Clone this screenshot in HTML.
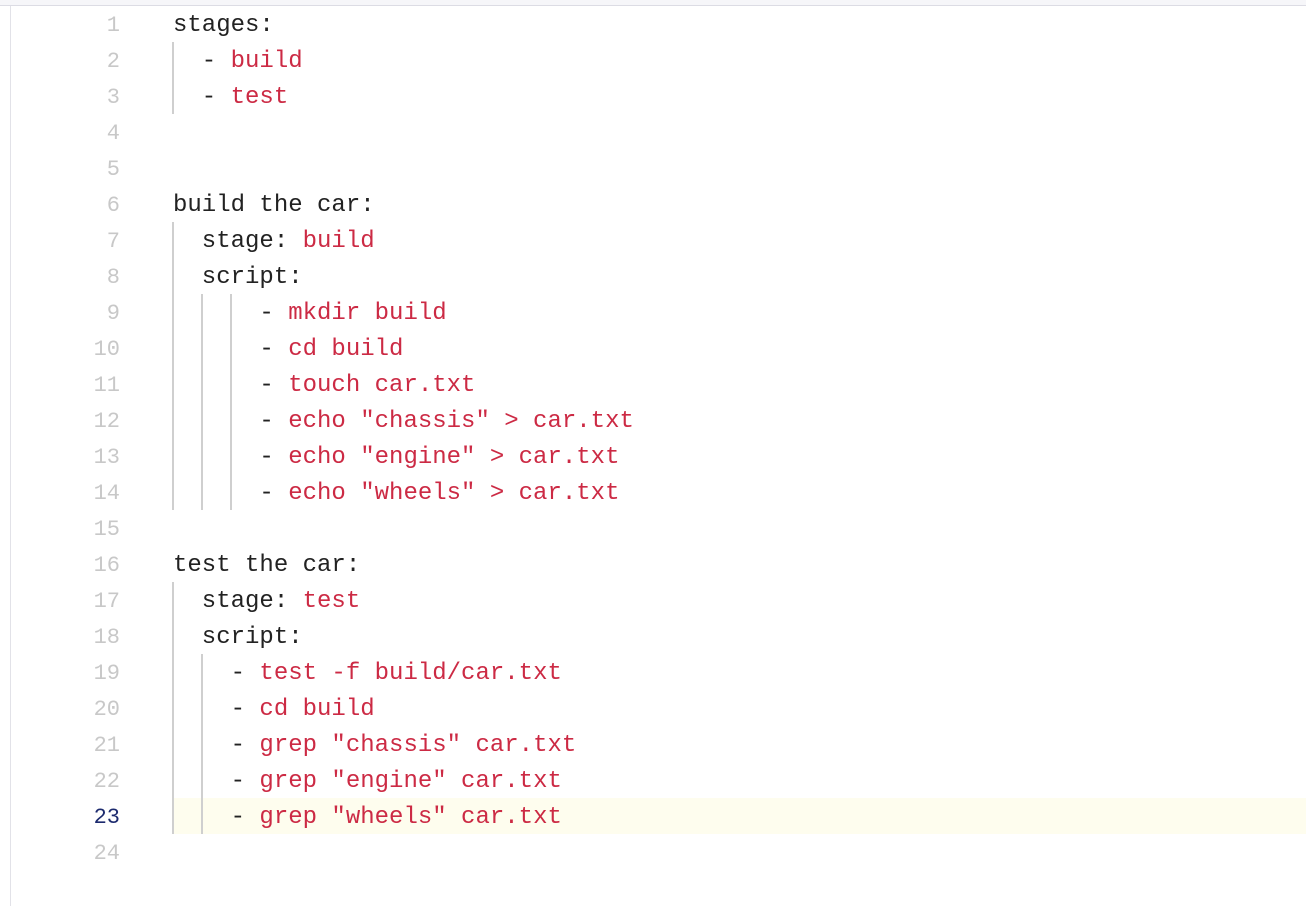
<!DOCTYPE html>
<html><head><style>
html,body{margin:0;padding:0;background:#fff;width:1306px;height:906px;overflow:hidden}
.top{position:absolute;left:0;top:0;width:1306px;height:5px;background:#f6f6f9;border-bottom:1px solid #dcdce4}
.left{position:absolute;left:10px;top:6px;width:1px;height:900px;background:#e2e2e8}
.hl{position:absolute;left:173px;top:798px;width:1133px;height:36px;background:#fefdee}
.ln{position:absolute;left:40px;width:80px;text-align:right;font:22px/36px "Liberation Mono",monospace;color:#c8c8c8}
.code{position:absolute;left:173px;font:24px/36px "Liberation Mono",monospace;color:#222;white-space:pre}
.r{color:#cc2a44}
.g{position:absolute;width:2px;background:#cfcfcf}
</style></head><body>
<div class="top"></div><div class="left"></div><div class="hl"></div>
<div class="ln" style="top:8px">1<br>2<br>3<br>4<br>5<br>6<br>7<br>8<br>9<br>10<br>11<br>12<br>13<br>14<br>15<br>16<br>17<br>18<br>19<br>20<br>21<br>22<br><span style="color:#1c2a6e">23</span><br>24</div>
<div class="g" style="left:172px;top:42px;height:72px"></div>
<div class="g" style="left:172px;top:222px;height:288px"></div>
<div class="g" style="left:201px;top:294px;height:216px"></div>
<div class="g" style="left:230px;top:294px;height:216px"></div>
<div class="g" style="left:172px;top:582px;height:252px"></div>
<div class="g" style="left:201px;top:654px;height:180px"></div>
<div class="code" style="top:8px">stages:
  - <span class="r">build</span>
  - <span class="r">test</span>


build the car:
  stage: <span class="r">build</span>
  script:
      - <span class="r">mkdir build</span>
      - <span class="r">cd build</span>
      - <span class="r">touch car.txt</span>
      - <span class="r">echo "chassis" &gt; car.txt</span>
      - <span class="r">echo "engine" &gt; car.txt</span>
      - <span class="r">echo "wheels" &gt; car.txt</span>

test the car:
  stage: <span class="r">test</span>
  script:
    - <span class="r">test -f build/car.txt</span>
    - <span class="r">cd build</span>
    - <span class="r">grep "chassis" car.txt</span>
    - <span class="r">grep "engine" car.txt</span>
    - <span class="r">grep "wheels" car.txt</span>
</div>
</body></html>
